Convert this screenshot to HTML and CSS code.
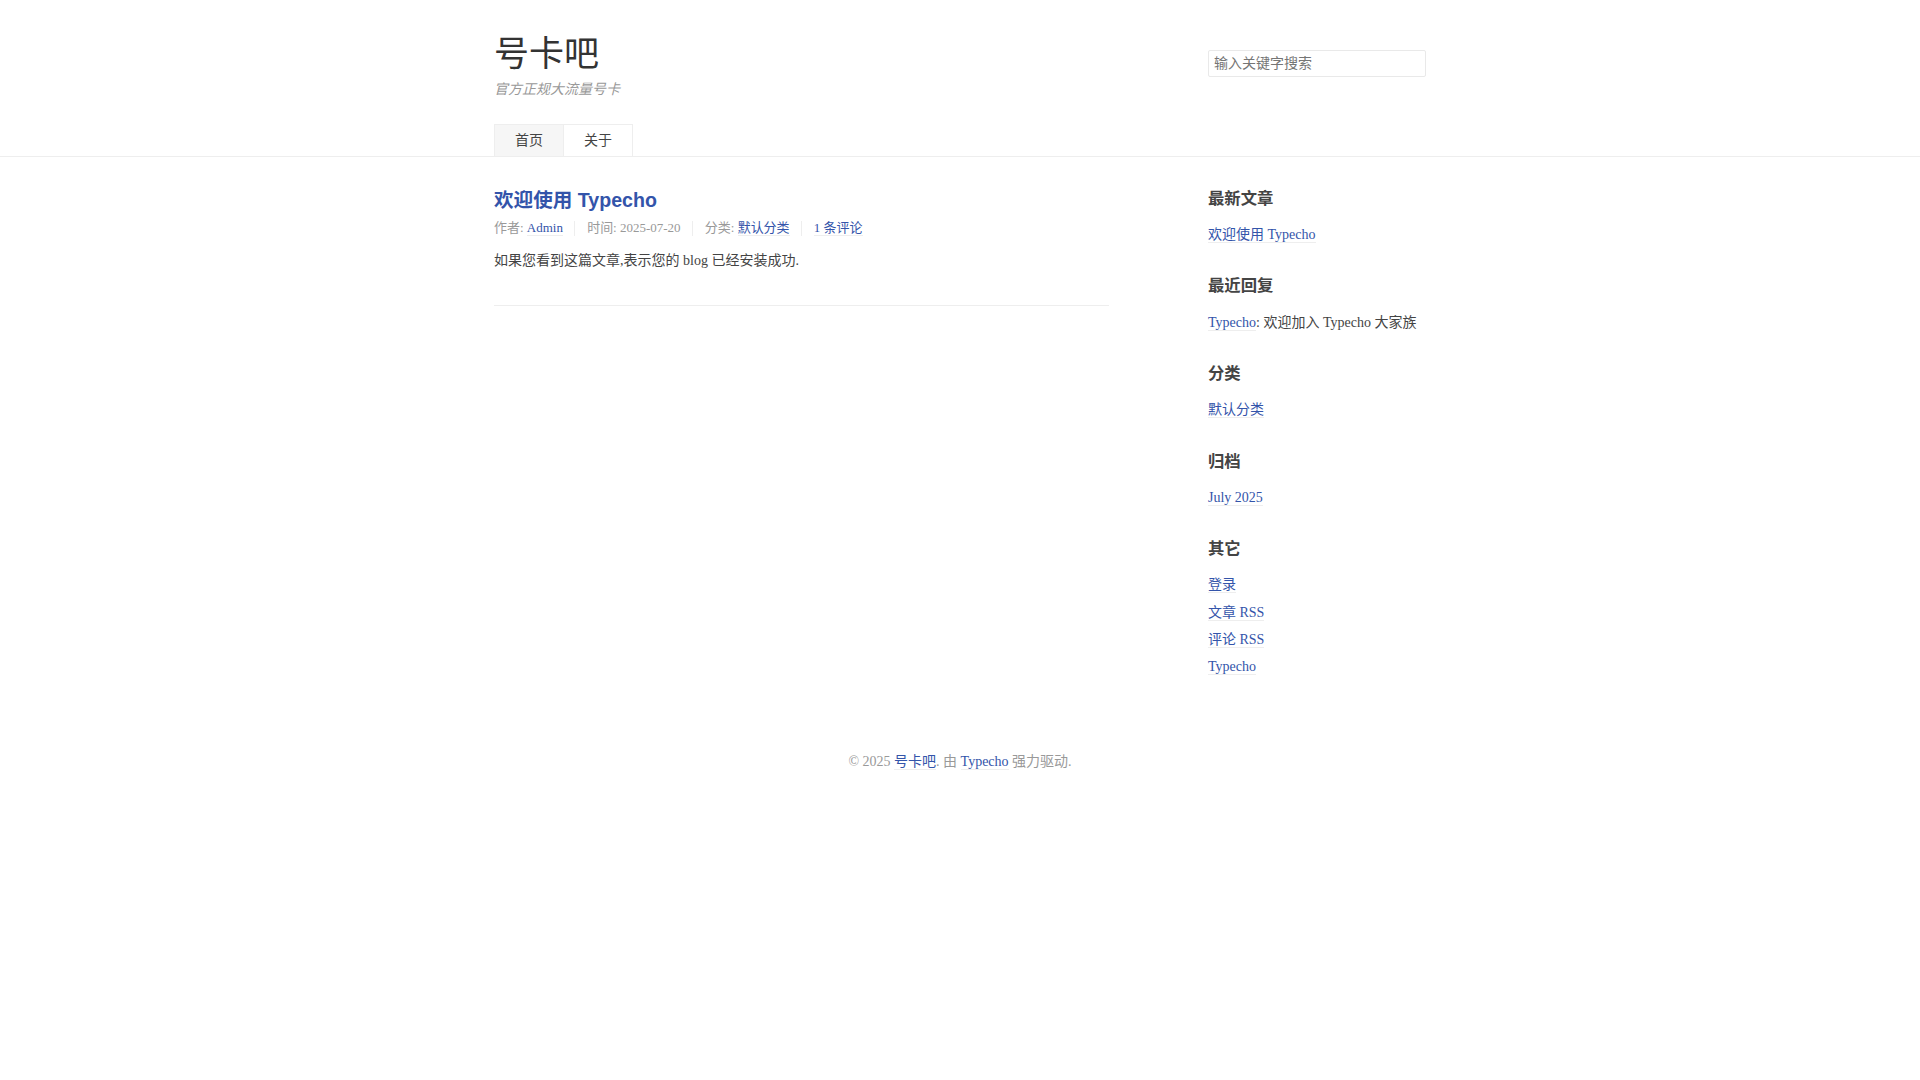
FILE: index.html
```html
<!DOCTYPE html>
<html lang="zh-CN">
<head>
  <meta charset="UTF-8">
  <title>号卡吧</title>
  <link rel="stylesheet" href="styles.css">
</head>
<body>

<header id="header">
  <div class="container">
    <div class="row">
      <div class="site-name col-9">
        <a id="logo" href="#">号卡吧</a>
        <p class="description">官方正规大流量号卡</p>
      </div>
      <div class="site-search col-3">
        <form id="search">
          <input type="text" class="text" name="s" placeholder="输入关键字搜索">
        </form>
      </div>
    </div>
    <nav id="nav-menu">
      <a class="current" href="#">首页</a>
      <a href="#">关于</a>
    </nav>
  </div>
</header>

<div id="body">
  <div class="container">
    <div class="row">
      <main id="main" class="col-8">
        <article class="post">
          <h2 class="post-title"><a href="#">欢迎使用 Typecho</a></h2>
          <ul class="post-meta">
            <li>作者: <a href="#">Admin</a></li>
            <li>时间: <time>2025-07-20</time></li>
            <li>分类: <a href="#">默认分类</a></li>
            <li><a href="#">1 条评论</a></li>
          </ul>
          <div class="post-content">
            <p>如果您看到这篇文章,表示您的 blog 已经安装成功.</p>
          </div>
        </article>
      </main>

      <aside id="secondary" class="col-3 col-offset-1">
        <section class="widget">
          <h3 class="widget-title">最新文章</h3>
          <ul class="widget-list">
            <li><a href="#">欢迎使用 Typecho</a></li>
          </ul>
        </section>
        <section class="widget">
          <h3 class="widget-title">最近回复</h3>
          <ul class="widget-list">
            <li><a href="#">Typecho</a>: 欢迎加入 Typecho 大家族</li>
          </ul>
        </section>
        <section class="widget">
          <h3 class="widget-title">分类</h3>
          <ul class="widget-list">
            <li><a href="#">默认分类</a></li>
          </ul>
        </section>
        <section class="widget">
          <h3 class="widget-title">归档</h3>
          <ul class="widget-list">
            <li><a href="#">July 2025</a></li>
          </ul>
        </section>
        <section class="widget">
          <h3 class="widget-title">其它</h3>
          <ul class="widget-list">
            <li><a href="#">登录</a></li>
            <li><a href="#">文章 RSS</a></li>
            <li><a href="#">评论 RSS</a></li>
            <li><a href="#">Typecho</a></li>
          </ul>
        </section>
      </aside>
    </div>
  </div>
</div>

<footer id="footer">
  &copy; 2025 <a href="#">号卡吧</a>.
  由 <a href="#">Typecho</a> 强力驱动.
</footer>

</body>
</html>
```

FILE: styles.css
```css
*, *::before, *::after {
  box-sizing: border-box;
}

html {
  font-size: 16px;
}

body {
  margin: 0;
  background-color: #FFF;
  color: #444;
  font-family: "Liberation Serif", "Noto Sans CJK SC", serif;
  font-size: 87.5%;
  line-height: 1.15;
}

a {
  color: #3354AA;
  text-decoration: none;
  border-bottom: 1px solid #EEE;
}

a:hover, a:active {
  color: #444;
}

h1, h2, h3, h4, h5, h6 {
  font-family: "Liberation Sans", "Noto Sans CJK SC", sans-serif;
}

/* grid */
.container {
  max-width: 952px;
  margin: 0 auto;
  padding: 0 10px;
}

.row {
  display: flex;
  margin: 0 -10px;
}

.col-3, .col-8, .col-9 {
  padding: 0 10px;
  min-height: 1px;
}

.col-3 { width: 25%; }
.col-8 { width: 66.66667%; }
.col-9 { width: 75%; }
.col-offset-1 { margin-left: 8.33333%; }

/* header */
#header {
  padding-top: 35px;
  border-bottom: 1px solid #EEE;
}

#logo {
  color: #333;
  font-size: 2.5em;
  border: none;
}

.description {
  margin: .5em 0 0;
  color: #999;
  font-style: italic;
}

#nav-menu {
  display: flex;
  margin: 26px 0 0;
  padding: 0;
}

#nav-menu a {
  display: block;
  margin-right: -1px;
  padding: 0 20px;
  height: 32px;
  line-height: 32px;
  border: 1px solid #EEE;
  border-bottom: none;
  color: #444;
}

#nav-menu .current {
  background: #F6F6F6;
}

#search {
  margin-top: 15px;
}

#search input {
  width: 100%;
  margin: 0;
  padding: 5px;
  padding-right: 30px;
  border: 1px solid #E9E9E9;
  border-radius: 2px;
  font-family: inherit;
  font-size: 100%;
  line-height: 15px;
  color: #444;
}

#search input::placeholder {
  color: #757575;
}

/* post */
.post {
  padding: 15px 0 20px;
  border-bottom: 1px solid #EEE;
}

.post-title {
  margin: .83em 0;
  font-size: 1.4em;
}

.post-title a {
  border: none;
}

.post-meta {
  margin-top: -0.5em;
  padding: 0;
  color: #999;
  font-size: .92857em;
  list-style: none;
}

.post-meta li {
  display: inline-block;
  margin: 0 8px 0 0;
  padding-left: 12px;
  border-left: 1px solid #EEE;
}

.post-meta li:first-child {
  margin-left: 0;
  padding-left: 0;
  border: none;
}

.post-content {
  line-height: 1.5;
}

/* sidebar */
#secondary {
  padding-top: 15px;
  word-wrap: break-word;
}

.widget {
  margin-bottom: 30px;
}

.widget-title {
  font-size: 1.17em;
}

.widget-list {
  list-style: none;
  padding: 0;
}

.widget-list li {
  margin: 5px 0;
  line-height: 1.6;
}

/* footer */
#footer {
  padding: 3em 0;
  line-height: 1.5;
  text-align: center;
  color: #999;
}
```
